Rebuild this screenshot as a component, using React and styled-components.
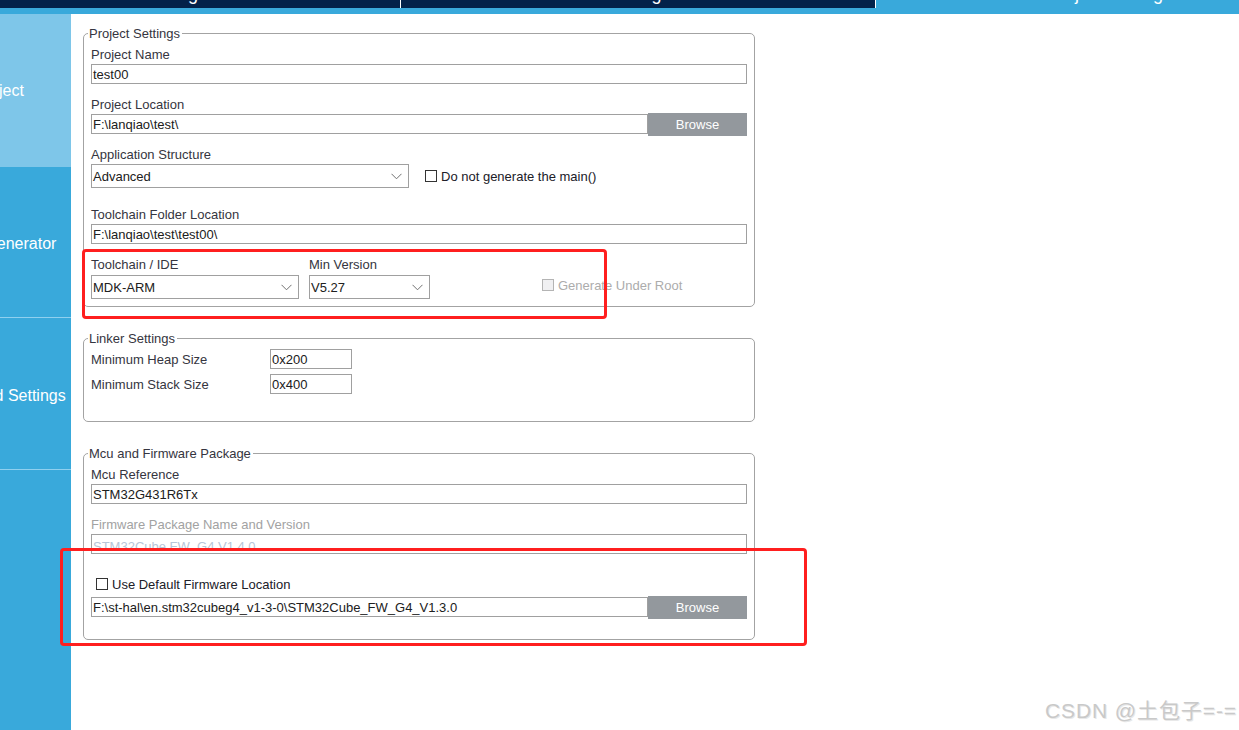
import styled, { createGlobalStyle } from "styled-components";

const GlobalStyle = createGlobalStyle`
  html, body {
    margin: 0;
    padding: 0;
    height: 100%;
    background: #ffffff;
    overflow: hidden;
  }
  body {
    font-family: "Liberation Sans", Arial, sans-serif;
  }
  #root {
    height: 100%;
  }
`;

const tabs = [
  { label: "Pinout & Configuration", active: false },
  { label: "Clock Configuration", active: false },
  { label: "Project Manager", active: true },
];

const navItems = [
  { label: "Project", height: 153, active: true, pt: 0 },
  { label: "Code Generator", height: 150, pt: 3 },
  { label: "Advanced Settings", height: 152, divider: true, pt: 5 },
  { label: "", height: 300, divider: true, pt: 0 },
];

const App = () => {
  return (
    <Page>
      <GlobalStyle />
      <TabBar>
        <TabTrack>
          {tabs.map((t, i) => (
            <Tab key={t.label} $active={t.active} $first={i === 0}>
              <TabLabel>{t.label}</TabLabel>
            </Tab>
          ))}
        </TabTrack>
      </TabBar>

      <Body>
        <Sidebar>
          {navItems.map((n, i) => (
            <NavItem key={i} $h={n.height} $active={n.active} $divider={n.divider} $pt={n.pt}>
              <NavLabel>{n.label}</NavLabel>
            </NavItem>
          ))}
        </Sidebar>

        <Main>
          <Fieldset>
            <Legend>Project Settings</Legend>

            <Group $mt={7}>
              <Label>Project Name</Label>
              <TextBox>test00</TextBox>
            </Group>

            <Group $mt={13}>
              <Label $mb={1}>Project Location</Label>
              <BrowseRow>
                <TextBox $grow>F:\lanqiao\test\</TextBox>
                <BrowseButton>Browse</BrowseButton>
              </BrowseRow>
            </Group>

            <Group $mt={11}>
              <Label>Application Structure</Label>
              <InlineRow>
                <Select $w={318}>
                  <span>Advanced</span>
                  <Chevron />
                </Select>
                <CheckItem $ml={16}>
                  <Box />
                  <CheckText>Do not generate the main()</CheckText>
                </CheckItem>
              </InlineRow>
            </Group>

            <Group $mt={19}>
              <Label>Toolchain Folder Location</Label>
              <TextBox>F:\lanqiao\test\test00\</TextBox>
            </Group>

            <ToolRow>
              <Column $w={208}>
                <Label $mb={3}>Toolchain / IDE</Label>
                <Select $w={208}>
                  <span>MDK-ARM</span>
                  <Chevron />
                </Select>
              </Column>
              <Column $w={121} $ml={10}>
                <Label $mb={3}>Min Version</Label>
                <Select $w={121}>
                  <span>V5.27</span>
                  <Chevron />
                </Select>
              </Column>
              <CheckItem $ml={112} $mb={7}>
                <Box $disabled />
                <CheckText $disabled>Generate Under Root</CheckText>
              </CheckItem>
            </ToolRow>
          </Fieldset>

          <Fieldset $mt={24} $pb={27}>
            <Legend>Linker Settings</Legend>
            <LinkerRow $mt={4}>
              <LinkerLabel>Minimum Heap Size</LinkerLabel>
              <TextBox $w={82}>0x200</TextBox>
            </LinkerRow>
            <LinkerRow $mt={5}>
              <LinkerLabel>Minimum Stack Size</LinkerLabel>
              <TextBox $w={82}>0x400</TextBox>
            </LinkerRow>
          </Fieldset>

          <Fieldset $mt={24} $pb={20}>
            <Legend>Mcu and Firmware Package</Legend>

            <Group $mt={7}>
              <Label>Mcu Reference</Label>
              <TextBox>STM32G431R6Tx</TextBox>
            </Group>

            <Group $mt={13}>
              <Label $disabled>Firmware Package Name and Version</Label>
              <TextBox $disabled>STM32Cube FW_G4 V1.4.0</TextBox>
            </Group>

            <CheckItem $ml={5} $mt={23}>
              <Box />
              <CheckText>Use Default Firmware Location</CheckText>
            </CheckItem>

            <BrowseRow $mt={5}>
              <TextBox $grow>F:\st-hal\en.stm32cubeg4_v1-3-0\STM32Cube_FW_G4_V1.3.0</TextBox>
              <BrowseButton>Browse</BrowseButton>
            </BrowseRow>
          </Fieldset>
        </Main>

        <Mark style={{ left: 82, top: 235, width: 525, height: 70 }} />
        <Mark style={{ left: 60, top: 534, width: 747, height: 98 }} />
      </Body>

      <Watermark>CSDN @土包子=-=</Watermark>
    </Page>
  );
};

const Chevron = () => (
  <ChevronIcon width="11" height="7" viewBox="0 0 11 7">
    <polyline points="0.5,0.8 5.5,5.8 10.5,0.8" fill="none" stroke="#707070" strokeWidth="1" />
  </ChevronIcon>
);

// Styled Components

const Page = styled.div`
  position: relative;
  display: flex;
  flex-direction: column;
  height: 100vh;
  overflow: hidden;
`;

const TabBar = styled.div`
  height: 8px;
  flex-shrink: 0;
  background: #03224a;
  border-bottom: 6px solid #39a9db;
  overflow: hidden;
`;

const TabTrack = styled.div`
  display: flex;
  margin-left: -74px;
  height: 8px;
`;

const Tab = styled.div`
  width: 474px;
  flex-shrink: 0;
  height: 8px;
  overflow: hidden;
  display: flex;
  justify-content: center;
  background: ${(p) => (p.$active ? "#39a9db" : "#03224a")};
  border-left: ${(p) => (p.$first ? "none" : "1px solid #ffffff")};
`;

const TabLabel = styled.span`
  color: #ffffff;
  font-size: 18px;
  line-height: 18px;
  margin-top: -15px;
  white-space: nowrap;
`;

const Body = styled.div`
  position: relative;
  flex: 1;
  display: flex;
`;

const Sidebar = styled.div`
  width: 71px;
  flex-shrink: 0;
  background: #39a9db;
  overflow: hidden;
  display: flex;
  flex-direction: column;
`;

const NavItem = styled.div`
  height: ${(p) => p.$h}px;
  flex-shrink: 0;
  box-sizing: border-box;
  padding-top: ${(p) => p.$pt || 0}px;
  background: ${(p) => (p.$active ? "#7ec6e9" : "#39a9db")};
  border-top: ${(p) => (p.$divider ? "1px solid #8fd0ef" : "none")};
  display: flex;
  align-items: center;
`;

const NavLabel = styled.span`
  width: 200px;
  margin-left: -101px;
  flex-shrink: 0;
  text-align: center;
  color: #ffffff;
  font-size: 16px;
  white-space: nowrap;
`;

const Main = styled.div`
  flex: 1;
  padding: 12px 0 0 12px;
`;

const Fieldset = styled.fieldset`
  width: 672px;
  box-sizing: border-box;
  margin: ${(p) => p.$mt || 0}px 0 0 0;
  padding: 0 7px ${(p) => (p.$pb === undefined ? 7 : p.$pb)}px 7px;
  border: 1px solid #a3a3a3;
  border-radius: 5px;
  min-width: 0;
`;

const Legend = styled.legend`
  position: relative;
  top: 1px;
  margin-left: -3px;
  padding: 0 2px 0 1px;
  font-size: 13px;
  line-height: 14px;
  color: #353540;
`;

const Group = styled.div`
  margin-top: ${(p) => p.$mt || 0}px;
`;

const Label = styled.div`
  font-size: 13px;
  line-height: 14px;
  padding-top: 1px;
  margin-bottom: ${(p) => (p.$mb === undefined ? 2 : p.$mb)}px;
  color: ${(p) => (p.$disabled ? "#a2a2a2" : "#353540")};
`;

const TextBox = styled.div`
  box-sizing: border-box;
  height: 20px;
  width: ${(p) => (p.$w ? `${p.$w}px` : p.$grow ? "auto" : "100%")};
  flex: ${(p) => (p.$grow ? 1 : "none")};
  border: 1px solid #a0a0a0;
  background: #ffffff;
  padding: ${(p) => (p.$disabled ? "4px 0 0 1px" : "2px 0 0 1px")};
  font-size: 13px;
  line-height: 15px;
  color: ${(p) => (p.$disabled ? "#b7c6d8" : "#202020")};
  white-space: nowrap;
  overflow: hidden;
`;

const BrowseRow = styled.div`
  display: flex;
  align-items: flex-start;
  margin-top: ${(p) => p.$mt || 0}px;

  & > ${TextBox} {
    margin-top: 1px;
  }
`;

const BrowseButton = styled.div`
  width: 99px;
  height: 23px;
  flex-shrink: 0;
  background: #93989d;
  color: #ffffff;
  font-size: 13px;
  display: flex;
  align-items: center;
  justify-content: center;
`;

const InlineRow = styled.div`
  display: flex;
  align-items: center;
`;

const Select = styled.div`
  box-sizing: border-box;
  width: ${(p) => p.$w}px;
  height: 24px;
  border: 1px solid #a0a0a0;
  background: #ffffff;
  display: flex;
  align-items: center;
  justify-content: space-between;
  padding: 0 6px 0 1px;
  font-size: 13px;
  color: #202020;
`;

const ChevronIcon = styled.svg`
  display: block;
  flex-shrink: 0;
`;

const CheckItem = styled.div`
  display: flex;
  align-items: center;
  margin-left: ${(p) => p.$ml || 0}px;
  margin-top: ${(p) => p.$mt || 0}px;
  margin-bottom: ${(p) => p.$mb || 0}px;
  height: 14px;
`;

const Box = styled.span`
  box-sizing: border-box;
  width: 12px;
  height: 12px;
  border: 1px solid ${(p) => (p.$disabled ? "#b4b4b4" : "#333333")};
  background: ${(p) => (p.$disabled ? "#f0f0f2" : "#ffffff")};
  margin-right: 4px;
`;

const CheckText = styled.span`
  font-size: 13px;
  line-height: 14px;
  padding-top: 1px;
  color: ${(p) => (p.$disabled ? "#acacac" : "#202028")};
`;

const ToolRow = styled.div`
  display: flex;
  align-items: flex-end;
  margin-top: 13px;
`;

const Column = styled.div`
  width: ${(p) => p.$w}px;
  margin-left: ${(p) => p.$ml || 0}px;
  flex-shrink: 0;
`;

const LinkerRow = styled.div`
  display: flex;
  align-items: center;
  margin-top: ${(p) => p.$mt || 0}px;
`;

const LinkerLabel = styled.div`
  width: 179px;
  flex-shrink: 0;
  font-size: 13px;
  color: #353540;
`;

const Mark = styled.div`
  position: absolute;
  box-sizing: border-box;
  border: 3px solid #ff1f1f;
  border-radius: 4px;
  pointer-events: none;
`;

const Watermark = styled.div`
  position: absolute;
  z-index: 5;
  right: 2px;
  bottom: 7px;
  font-family: "Liberation Sans", "Noto Sans CJK SC", sans-serif;
  font-size: 21px;
  line-height: 24px;
  letter-spacing: 0.9px;
  color: #c9c9c9;
  text-shadow: 1px 1px 0 #e8e8e8;
  white-space: nowrap;
`;

export default App;
